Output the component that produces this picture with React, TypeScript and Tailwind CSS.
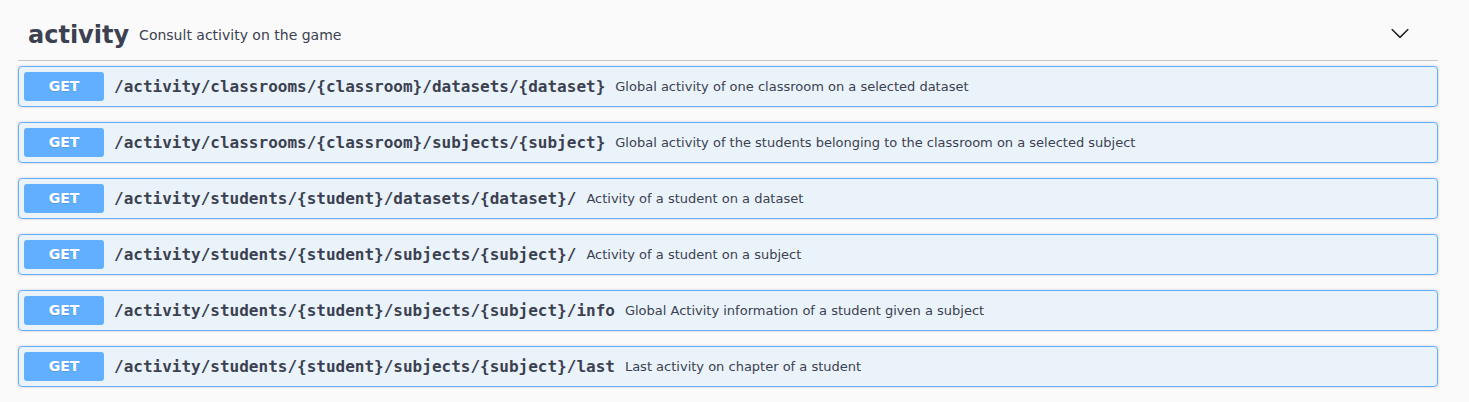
const endpoints = [
  { path: "/activity/classrooms/{classroom}/datasets/{dataset}", desc: "Global activity of one classroom on a selected dataset" },
  { path: "/activity/classrooms/{classroom}/subjects/{subject}", desc: "Global activity of the students belonging to the classroom on a selected subject" },
  { path: "/activity/students/{student}/datasets/{dataset}/", desc: "Activity of a student on a dataset" },
  { path: "/activity/students/{student}/subjects/{subject}/", desc: "Activity of a student on a subject" },
  { path: "/activity/students/{student}/subjects/{subject}/info", desc: "Global Activity information of a student given a subject" },
  { path: "/activity/students/{student}/subjects/{subject}/last", desc: "Last activity on chapter of a student" },
];

function Chevron() {
  return (
    <svg width="20" height="20" viewBox="0 0 20 20" className="mb-[4px] fill-[#1c1c1c]">
      <path d="M17.418 6.109c.272-.268.709-.268.979 0s.271.701 0 .969l-7.908 7.83c-.27.268-.707.268-.979 0l-7.908-7.83c-.27-.268-.27-.701 0-.969.271-.268.709-.268.979 0L10 13.25l7.418-7.141z" />
    </svg>
  );
}

export default function App() {
  return (
    <div className="min-h-[402px] bg-[#fafafa] font-['DejaVu_Sans',sans-serif] text-[#3b4151]">
      <div className="pl-[18px] pr-[31px]">
        {/* Tag header */}
        <div className="flex h-[61px] items-center border-b border-[#c4c6cb] pl-[10px] pr-[28px] pt-[10px]">
          <span className="text-[24px] font-bold leading-none">activity</span>
          <span className="pl-[10px] text-[14px]">Consult activity on the game</span>
          <div className="flex-1" />
          <Chevron />
        </div>

        {/* Operations */}
        <div className="mt-[5px] flex flex-col gap-[15px]">
          {endpoints.map((ep) => (
            <div
              key={ep.path}
              className="flex items-center rounded-[4px] border border-[#61affe] bg-[#ebf3fa] p-[5px] shadow-[0_0_3px_rgba(0,0,0,0.19)]"
            >
              <span className="flex h-[29px] w-[80px] shrink-0 items-center justify-center rounded-[3px] bg-[#61affe] text-[14px] font-bold text-white [text-shadow:0_1px_0_rgba(0,0,0,0.1)]">
                GET
              </span>
              <span className="px-[10px] font-['DejaVu_Sans_Mono',monospace] text-[16px] font-bold">
                {ep.path}
              </span>
              <span className="text-[13px]">{ep.desc}</span>
            </div>
          ))}
        </div>
      </div>
    </div>
  );
}
